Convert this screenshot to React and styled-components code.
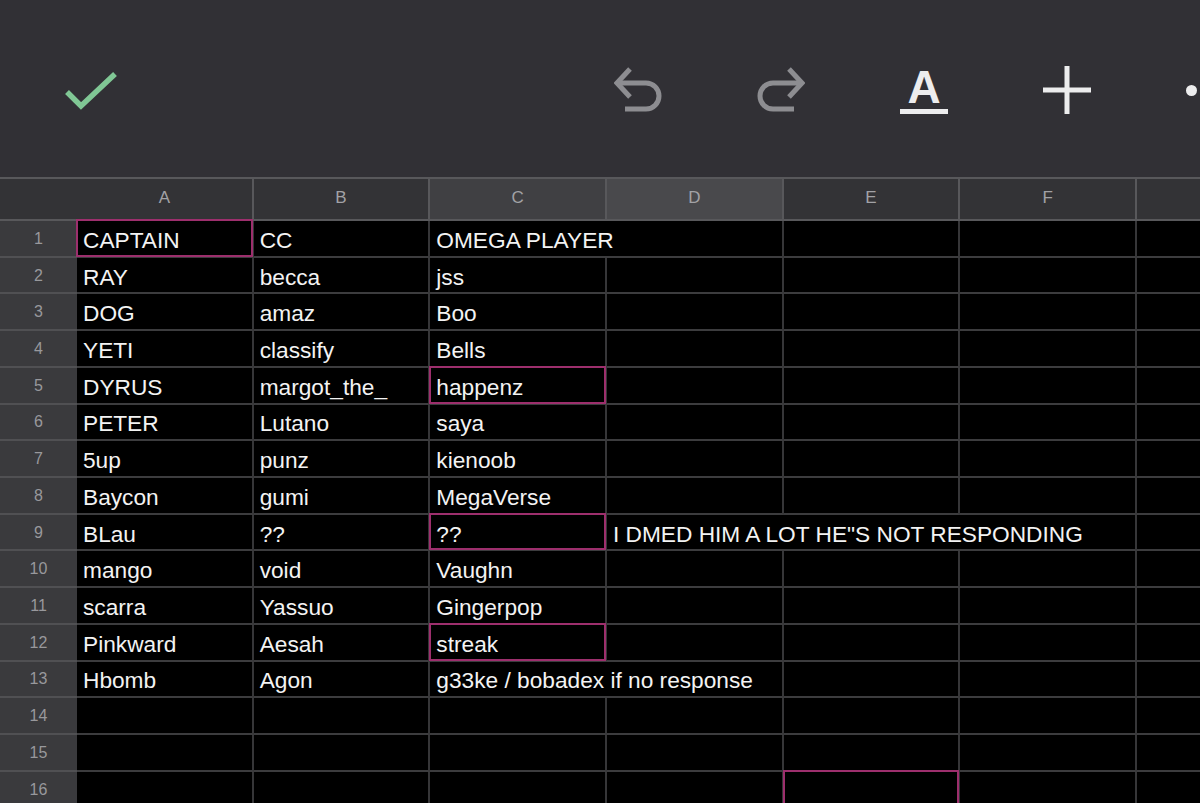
import React from "react";
import styled, { createGlobalStyle, css } from "styled-components";

const Global = createGlobalStyle`
  html, body { margin: 0; padding: 0; background: #000; overflow: hidden; }
  body { font-family: "Liberation Sans", Arial, sans-serif; }
`;

const Page = styled.div`
  width: 1200px;
  height: 803px;
  overflow: hidden;
  background: #000;
  display: flex;
  flex-direction: column;
`;

const Toolbar = styled.div`
  flex: 0 0 177px;
  background: #313035;
  display: flex;
  align-items: center;
  padding: 3px 0 0 65px;
  box-sizing: border-box;
  overflow: hidden;
`;

const IconBox = styled.div`
  width: ${(p) => p.$w || 48}px;
  height: 48px;
  display: flex;
  align-items: center;
  justify-content: center;
  flex: 0 0 auto;
  padding-top: ${(p) => p.$dy || 0}px;
  box-sizing: border-box;
`;

const RightGroup = styled.div`
  display: flex;
  align-items: center;
  gap: 95px;
  margin-left: 495px;
`;

const FormatA = styled.div`
  width: 48px;
  height: 48px;
  display: flex;
  flex-direction: column;
  align-items: center;
  justify-content: flex-end;
  color: #ededee;
`;

const ALetter = styled.span`
  font-family: "Liberation Sans", Arial, sans-serif;
  font-weight: 700;
  font-size: 46px;
  line-height: 38px;
  height: 38px;
  display: block;
`;

const ABar = styled.div`
  width: 48px;
  height: 5px;
  background: #ededee;
  margin-top: 3px;
`;

const Dot = styled.div`
  width: 11px;
  height: 11px;
  border-radius: 50%;
  background: #ededee;
  flex: 0 0 auto;
`;

const Sheet = styled.div`
  flex: 1;
  border-top: 2px solid #58585b;
  display: grid;
  grid-template-columns: 77px repeat(7, 176.67px);
  grid-auto-rows: 36.73px;
  grid-template-rows: 42px;
  overflow: hidden;
`;

const HeadCell = styled.div`
  box-sizing: border-box;
  background: ${(p) => p.$bg || "#333336"};
  border-bottom: 2px solid #58585b;
  border-right: ${(p) => (p.$corner ? "0" : "2px solid #58585b")};
  color: #a2a2a6;
  font-size: 17px;
  display: flex;
  align-items: center;
  justify-content: center;
  padding-bottom: 2px;
`;

const RowNum = styled.div`
  box-sizing: border-box;
  background: #3a3a3d;
  border-bottom: 2px solid #505053;
  color: #98989c;
  font-size: 16px;
  display: flex;
  align-items: center;
  justify-content: center;
  padding-top: 1px;
`;

const Cell = styled.div`
  position: relative;
  box-sizing: border-box;
  background: #000;
  border-right: 2px solid #363638;
  border-bottom: 2px solid #3c3c3e;
  color: #f3f3f3;
  font-size: 22.7px;
  white-space: nowrap;
  display: flex;
  align-items: center;
  padding: 4px 0 0 6px;
  overflow: hidden;
  grid-column: span ${(p) => p.$span || 1};
  ${(p) =>
    p.$sel &&
    css`
      overflow: visible;
      &::after {
        content: "";
        position: absolute;
        left: -1px;
        top: -2px;
        right: -1px;
        bottom: -1px;
        border: 2px solid #9d2f6d;
        pointer-events: none;
        z-index: 2;
      }
    `}
`;

const CheckIcon = () => (
  <svg width="54" height="40" viewBox="0 0 54 40">
    <polyline points="2,20 16,34 50,2" fill="none" stroke="#80c795" strokeWidth="5.5" />
  </svg>
);

const UndoIcon = ({ flip }) => (
  <svg width="48" height="46" viewBox="0 0 48 46" style={flip ? { transform: "scaleX(-1)" } : undefined}>
    <g fill="none" stroke="#8d8d91" strokeWidth="5" strokeLinejoin="miter">
      <polyline points="16,2 3,16 16,30" />
      <path d="M3,16 H32 A13,13 0 0 1 32,42 H11" />
    </g>
  </svg>
);

const PlusIcon = () => (
  <svg width="48" height="48" viewBox="0 0 48 48">
    <g stroke="#ededee" strokeWidth="5">
      <line x1="24" y1="0" x2="24" y2="48" />
      <line x1="0" y1="24" x2="48" y2="24" />
    </g>
  </svg>
);

const COLS = ["A", "B", "C", "D", "E", "F", ""];

const rows = [
  [["CAPTAIN", { sel: true }], ["CC"], ["OMEGA PLAYER", { span: 2 }]],
  [["RAY"], ["becca"], ["jss"]],
  [["DOG"], ["amaz"], ["Boo"]],
  [["YETI"], ["classify"], ["Bells"]],
  [["DYRUS"], ["margot_the_"], ["happenz", { sel: true }]],
  [["PETER"], ["Lutano"], ["saya"]],
  [["5up"], ["punz"], ["kienoob"]],
  [["Baycon"], ["gumi"], ["MegaVerse"]],
  [["BLau"], ["??"], ["??", { sel: true }], ["I DMED HIM A LOT HE\"S NOT RESPONDING", { span: 3 }]],
  [["mango"], ["void"], ["Vaughn"]],
  [["scarra"], ["Yassuo"], ["Gingerpop"]],
  [["Pinkward"], ["Aesah"], ["streak", { sel: true }]],
  [["Hbomb"], ["Agon"], ["g33ke / bobadex if no response", { span: 2 }]],
  [],
  [],
  [[""], [""], [""], [""], ["", { sel: true }]],
];

function buildRow(def) {
  const cells = [];
  let used = 0;
  def.forEach(([text, opt = {}]) => {
    const span = opt.span || 1;
    cells.push({ text, span, sel: !!opt.sel });
    used += span;
  });
  while (used < 7) {
    cells.push({ text: "", span: 1, sel: false });
    used += 1;
  }
  return cells;
}

const headBg = { C: "#404043", D: "#49494c" };

export default function App() {
  return (
    <Page>
      <Global />
      <Toolbar>
        <IconBox $w={54} $dy={3}>
          <CheckIcon />
        </IconBox>
        <RightGroup>
          <IconBox>
            <UndoIcon />
          </IconBox>
          <IconBox>
            <UndoIcon flip />
          </IconBox>
          <FormatA>
            <ALetter>A</ALetter>
            <ABar />
          </FormatA>
          <IconBox>
            <PlusIcon />
          </IconBox>
          <Dot />
        </RightGroup>
      </Toolbar>
      <Sheet>
        <HeadCell $corner />
        {COLS.map((c, i) => (
          <HeadCell key={i} $bg={headBg[c]}>
            {c}
          </HeadCell>
        ))}
        {rows.map((def, r) => (
          <React.Fragment key={r}>
            <RowNum>{r + 1}</RowNum>
            {buildRow(def).map((cell, i) => (
              <Cell key={i} $span={cell.span} $sel={cell.sel}>
                {cell.text}
              </Cell>
            ))}
          </React.Fragment>
        ))}
      </Sheet>
    </Page>
  );
}
